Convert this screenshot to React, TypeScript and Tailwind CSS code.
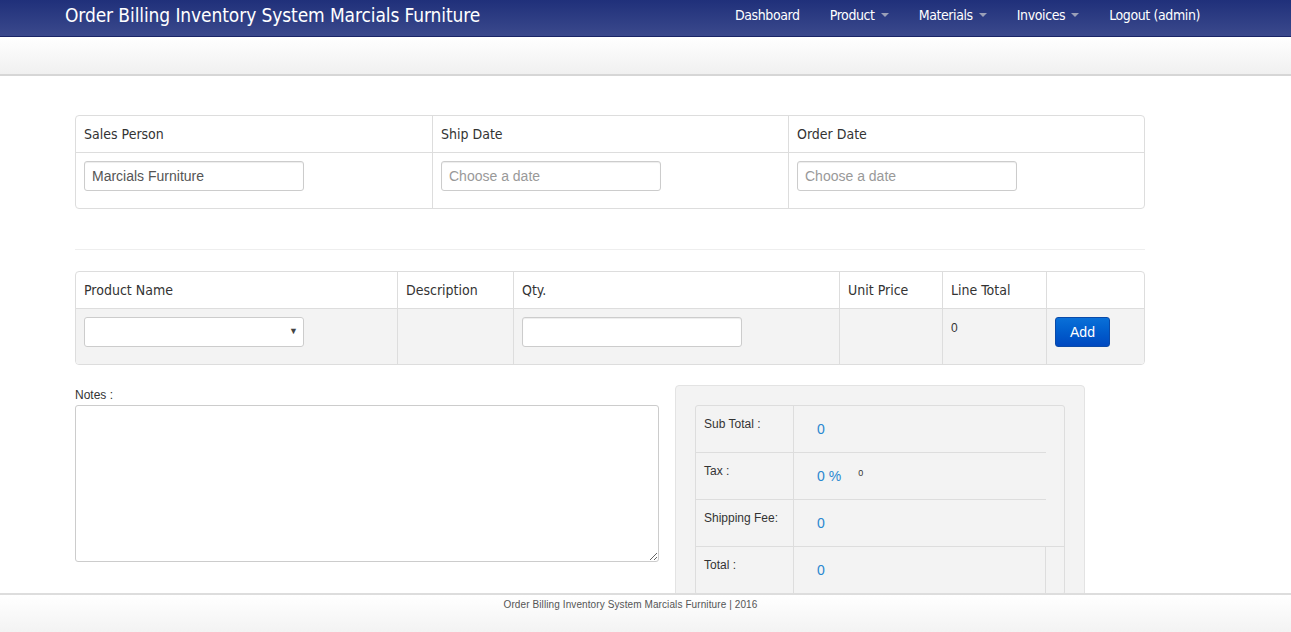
const cond = "font-['DejaVu_Sans_Condensed','Liberation_Sans_Narrow','Roboto',sans-serif]";
const arial = "font-['Liberation_Sans',Arial,sans-serif]";

function Caret() {
  return <span className="ml-1.5 inline-block w-0 h-0 border-x-[4px] border-x-transparent border-t-[4px] border-t-[#9aa0b8] align-middle" />;
}

const navItems = [
  { label: 'Dashboard', caret: false },
  { label: 'Product', caret: true },
  { label: 'Materials', caret: true },
  { label: 'Invoices', caret: true },
  { label: 'Logout (admin)', caret: false },
];

function TextBox({ placeholder, value }: { placeholder?: string; value?: string }) {
  return (
    <input
      readOnly
      value={value}
      placeholder={placeholder}
      className={`${arial} w-[220px] h-[30px] px-[7px] text-[14px] text-[#555] placeholder:text-[#999] bg-white border border-[#ccc] rounded-[3px] shadow-[inset_0_1px_1px_rgba(0,0,0,0.075)] outline-none`}
    />
  );
}

const summary = [
  { l: 'Sub Total :', v: '0', b: 'short' },
  { l: 'Tax :', v: '0 %', b: 'short', x: '0' },
  { l: 'Shipping Fee:', v: '0', b: 'full' },
  { l: 'Total :', v: '0', b: 'none' },
];

export default function App() {
  return (
    <div className={`${arial} min-h-[632px] bg-white text-[#333] relative`}>
      {/* Navbar */}
      <div className="h-[37px] bg-gradient-to-b from-[#20307a] to-[#3b498c] border-b border-[#1a2566] flex items-center justify-between pl-[65px] pr-[91px] pb-[6px]">
        <div className={`${cond} text-white text-[19px] tracking-[-0.1px]`}>Order Billing Inventory System Marcials Furniture</div>
        <div className={`${cond} flex items-center gap-[30px] text-white text-[14px] font-medium tracking-[-0.4px]`}>
          {navItems.map((n) => (
            <span key={n.label} className="flex items-center">
              {n.label}
              {n.caret && <Caret />}
            </span>
          ))}
        </div>
      </div>
      {/* Sub bar */}
      <div className="h-[39px] bg-gradient-to-b from-white to-[#f0f0f0] border-b-2 border-[#d6d6d6]" />

      <div className="w-[1070px] ml-[75px] pt-[39px] pb-[20px]">
        {/* Top table */}
        <div className="border border-[#ddd] rounded-[4px] grid grid-cols-3">
          {['Sales Person', 'Ship Date', 'Order Date'].map((h, i) => (
            <div key={h} className={`${i > 0 ? 'border-l border-[#ddd]' : ''}`}>
              <div className={`${cond} h-[37px] border-b border-[#ddd] px-2 flex items-center text-[14px] text-[#333]`}>{h}</div>
              <div className="h-[55px] px-2 pt-2">
                {i === 0 ? <TextBox value="Marcials Furniture" /> : <TextBox placeholder="Choose a date" />}
              </div>
            </div>
          ))}
        </div>

        <div className="mt-[40px] border-t border-[#eee]" />

        {/* Product table */}
        <div className="mt-[21px] border border-[#ddd] rounded-[4px] overflow-hidden grid grid-cols-[321px_116px_326px_103px_104px_1fr]">
          {['Product Name', 'Description', 'Qty.', 'Unit Price', 'Line Total', ''].map((h, i) => (
            <div key={i} className={`${cond} h-[37px] border-b border-[#ddd] px-2 flex items-center text-[14px] ${i > 0 ? 'border-l' : ''}`}>{h}</div>
          ))}
          <div className="h-[55px] bg-[#f3f3f3] px-2 pt-2">
            <div className="relative w-[220px] h-[30px] bg-white border border-[#ccc] rounded-[3px]">
              <span className="absolute right-[5px] top-[7px] text-[9px] text-[#444]">▼</span>
            </div>
          </div>
          <div className="h-[55px] bg-[#f3f3f3] border-l border-[#ddd]" />
          <div className="h-[55px] bg-[#f3f3f3] border-l border-[#ddd] px-2 pt-2">
            <TextBox />
          </div>
          <div className="h-[55px] bg-[#f3f3f3] border-l border-[#ddd]" />
          <div className="h-[55px] bg-[#f3f3f3] border-l border-[#ddd] px-2 pt-[10px] text-[12px] text-[#333]">0</div>
          <div className="h-[55px] bg-[#f3f3f3] border-l border-[#ddd] px-2 pt-2">
            <button className="w-[55px] h-[30px] rounded-[3px] bg-gradient-to-b from-[#0a70d8] to-[#0048c0] border border-[#0a4aa8] text-white text-[14px]">Add</button>
          </div>
        </div>

        {/* Notes + summary */}
        <div className="mt-[20px] flex items-start">
          <div className="w-[584px]">
            <div className="text-[12px] text-[#333] leading-[20px]">Notes :</div>
            <textarea readOnly className="w-[584px] h-[157px] block border border-[#ccc] rounded-[3px] bg-white outline-none" />
          </div>
          <div className="ml-[16px] w-[410px] h-[230px] bg-[#f3f3f3] border border-[#e3e3e3] rounded-[4px] pt-[19px] pl-[19px]">
            <div className="w-[370px] border border-[#ddd] rounded-[3px] text-[12px]">
              {summary.map((r) => (
                <div key={r.l} className="flex h-[47px] relative">
                  <div className="w-[98px] border-r border-[#ddd] pl-[8px] pt-[9px] text-[#333]">{r.l}</div>
                  <div className="flex-1 pl-[23px] pt-[13px] text-[14px] text-[#2a88d0] flex items-start">
                    {r.v}
                    {r.x && <span className="ml-[17px] mt-[1px] text-[9px] text-[#333]">{r.x}</span>}
                  </div>
                  {r.b === 'short' && <div className="absolute bottom-0 left-0 w-[350px] border-b border-[#ddd]" />}
                  {r.b === 'full' && <div className="absolute bottom-0 left-0 right-0 border-b border-[#ddd]" />}
                  {r.b === 'none' && <div className="absolute top-0 bottom-0 left-[349px] border-l border-[#ddd]" />}
                </div>
              ))}
            </div>
          </div>
        </div>
      </div>

      {/* Footer */}
      <div className="fixed bottom-0 left-0 right-0 h-[39px] bg-gradient-to-b from-white to-[#f3f3f3] border-t-2 border-[#ddd] flex justify-center pr-[30px] pt-[2px]">
        <span className="text-[10px] text-[#555] tracking-[0.1px]">Order Billing Inventory System Marcials Furniture | 2016</span>
      </div>
    </div>
  );
}
